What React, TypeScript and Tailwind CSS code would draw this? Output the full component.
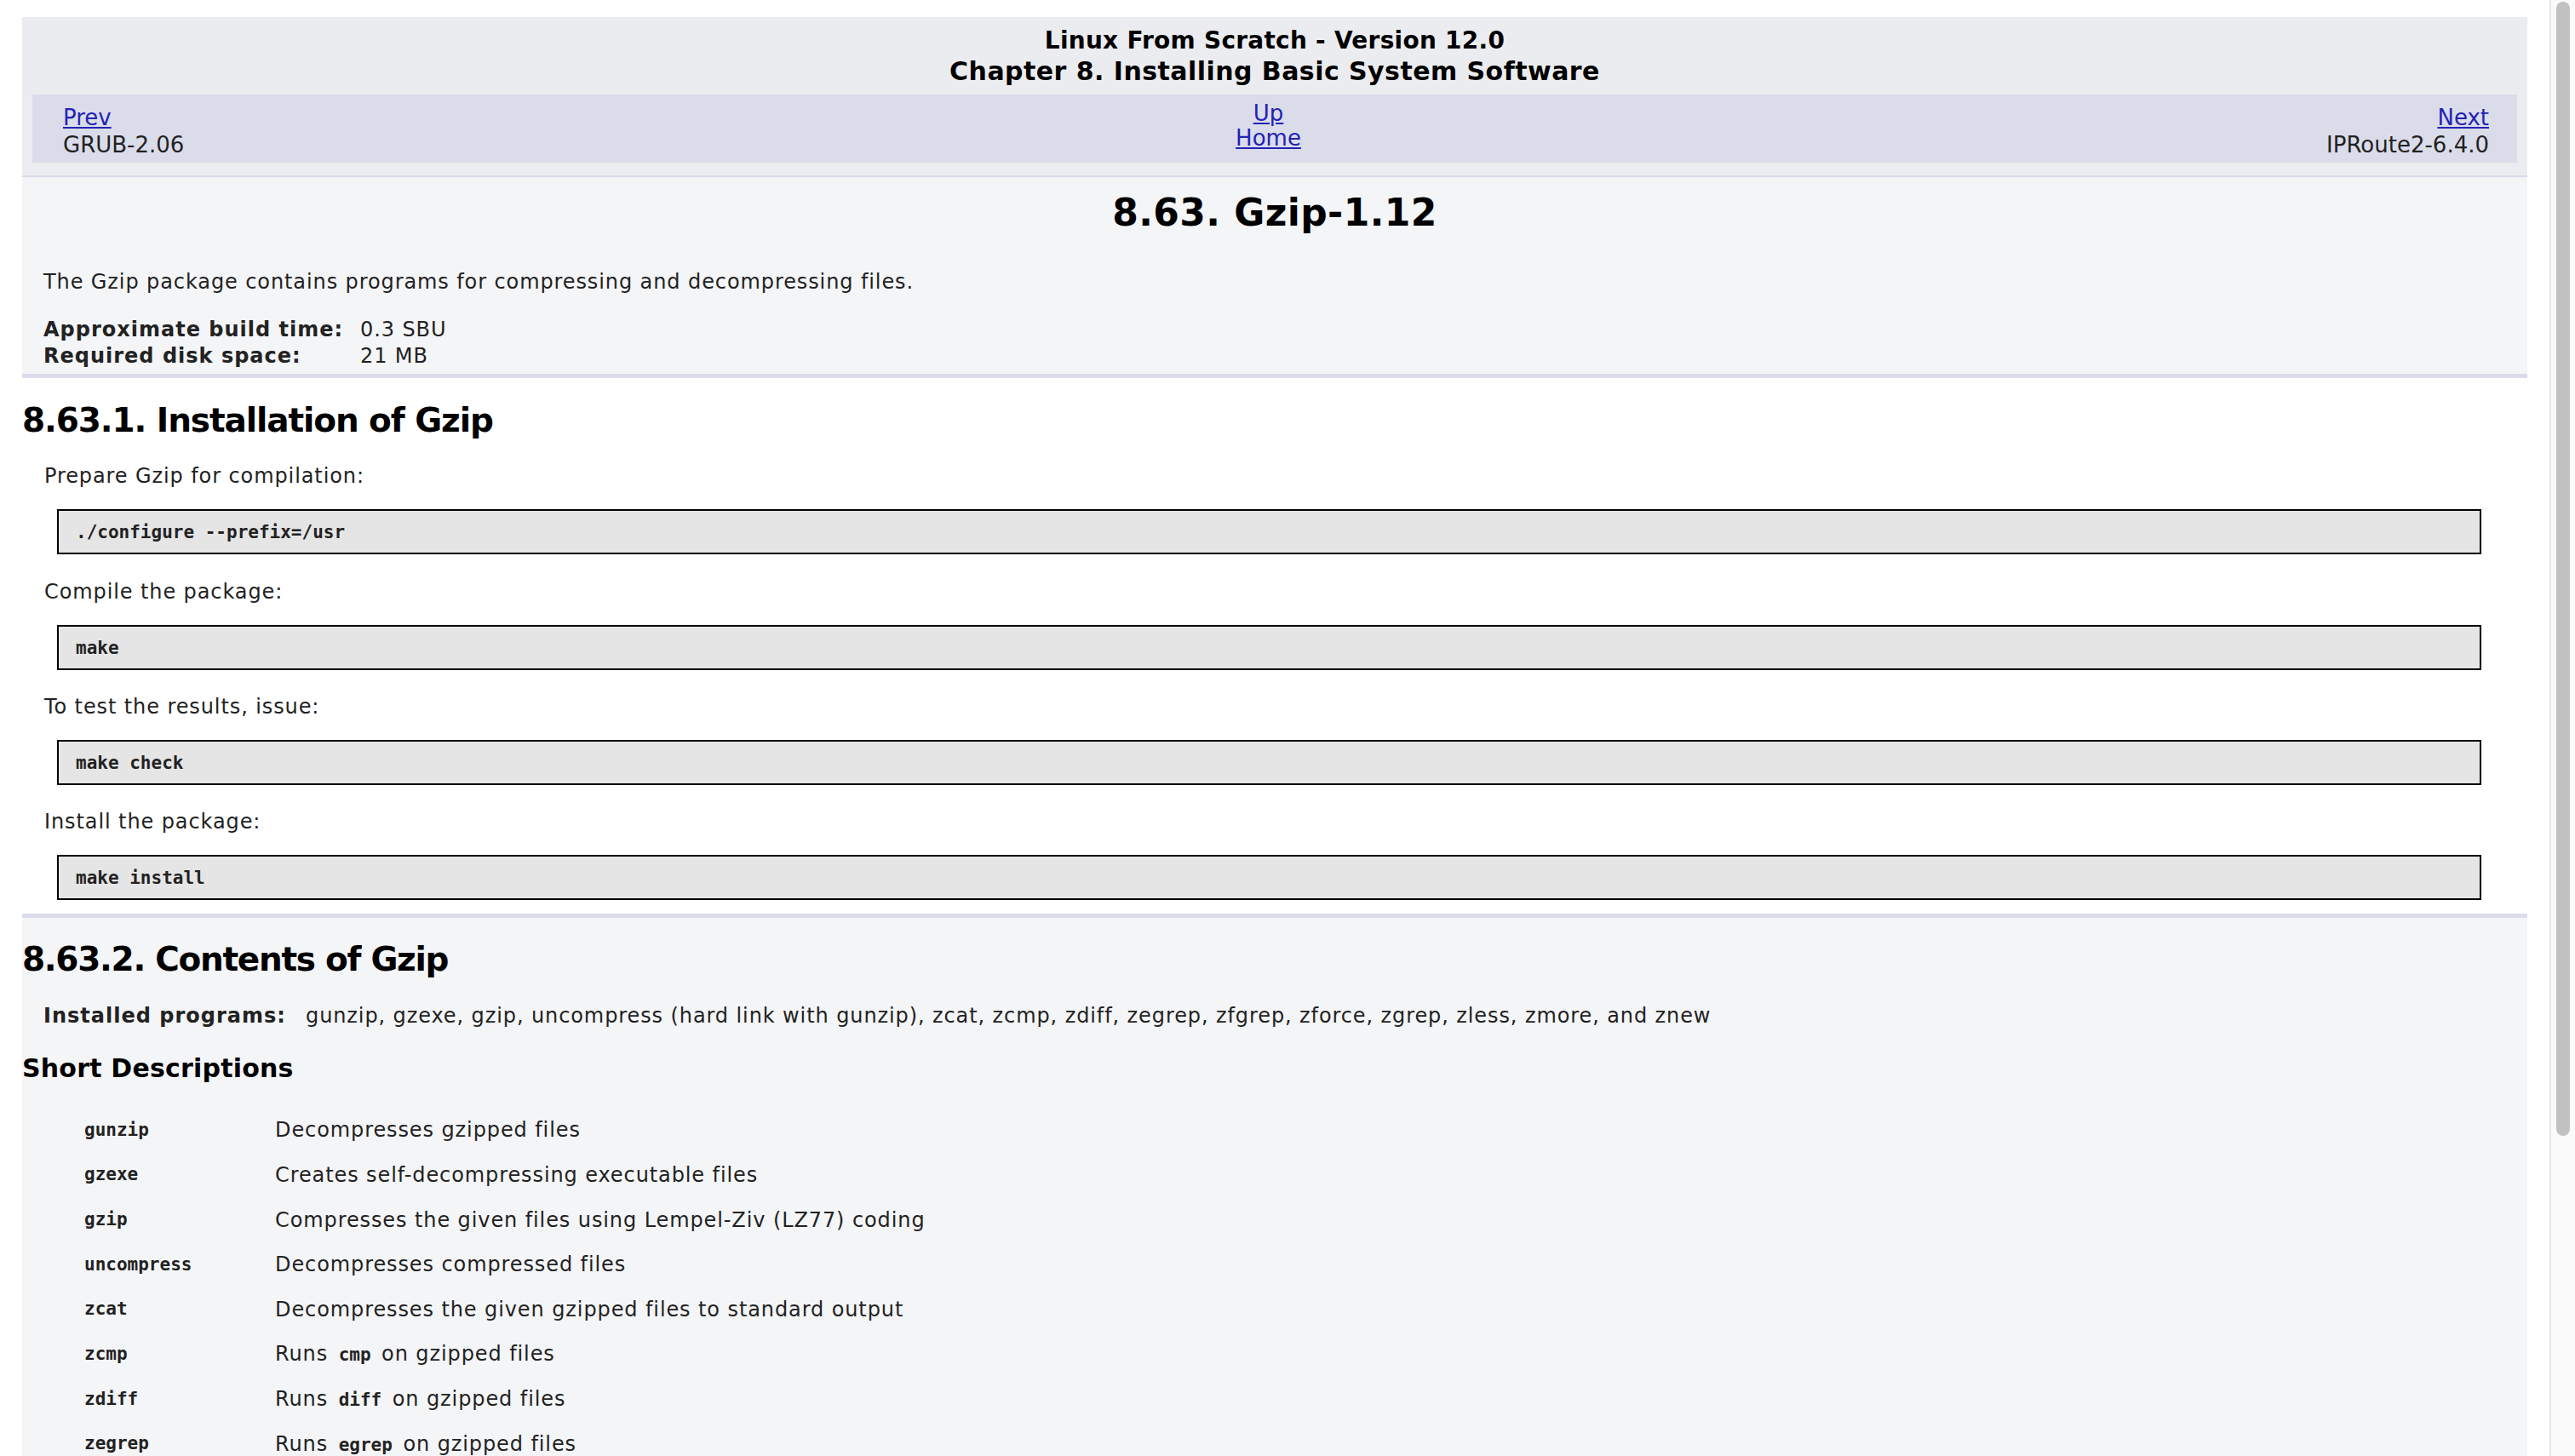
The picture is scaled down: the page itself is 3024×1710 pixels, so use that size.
import React from "react";

// Linux From Scratch book page: 8.63. Gzip-1.12

const sans = "font-['DejaVu_Sans',Verdana,sans-serif]";
const mono = "font-['DejaVu_Sans_Mono',monospace]";

type Row = { term: string; desc: React.ReactNode };

const Cmd = ({ children, inline }: { children: React.ReactNode; inline?: boolean }) => (
  <code className={`${mono} font-bold text-[21px] tracking-normal ${inline ? "mx-[4px]" : ""}`}>
    {children}
  </code>
);

const rows: Row[] = [
  { term: "gunzip", desc: "Decompresses gzipped files" },
  { term: "gzexe", desc: "Creates self-decompressing executable files" },
  { term: "gzip", desc: "Compresses the given files using Lempel-Ziv (LZ77) coding" },
  { term: "uncompress", desc: "Decompresses compressed files" },
  { term: "zcat", desc: "Decompresses the given gzipped files to standard output" },
  {
    term: "zcmp",
    desc: (
      <>
        Runs <Cmd inline>cmp</Cmd> on gzipped files
      </>
    ),
  },
  {
    term: "zdiff",
    desc: (
      <>
        Runs <Cmd inline>diff</Cmd> on gzipped files
      </>
    ),
  },
  {
    term: "zegrep",
    desc: (
      <>
        Runs <Cmd inline>egrep</Cmd> on gzipped files
      </>
    ),
  },
  {
    term: "zfgrep",
    desc: (
      <>
        Runs <Cmd inline>fgrep</Cmd> on gzipped files
      </>
    ),
  },
];

const steps = [
  { text: "Prepare Gzip for compilation:", cmd: "./configure --prefix=/usr" },
  { text: "Compile the package:", cmd: "make" },
  { text: "To test the results, issue:", cmd: "make check" },
  { text: "Install the package:", cmd: "make install" },
];

const NavHeader = () => (
  <div className="bg-[#ebecef] border-b-2 border-[#d9dae6] pt-[10px] pb-[15px]">
    <h4 className="text-center font-bold text-black text-[28px] leading-[36px] tracking-[0.25px]">
      Linux From Scratch - Version 12.0
    </h4>
    <h3 className="text-center font-bold text-black text-[30px] leading-[36px] tracking-[0.45px]">
      Chapter 8. Installing Basic System Software
    </h3>
    <div className="mx-[12px] mt-[9px] h-[80px] bg-[#dadcea] flex text-[26px] tracking-normal">
      <div className="flex-1 pl-[36px] pt-[11px] leading-[32px]">
        <a href="#" className="text-[#2323b4] underline block w-fit">
          Prev
        </a>
        <p>GRUB-2.06</p>
      </div>
      <div className="flex-1 flex flex-col items-center pt-[8px] pr-[18px] leading-[29px]">
        <a href="#" className="text-[#2323b4] underline">
          Up
        </a>
        <a href="#" className="text-[#2323b4] underline">
          Home
        </a>
      </div>
      <div className="flex-1 flex flex-col items-end pr-[33px] pt-[11px] leading-[32px]">
        <a href="#" className="text-[#2323b4] underline">
          Next
        </a>
        <p>IPRoute2-6.4.0</p>
      </div>
    </div>
  </div>
);

const Package = () => (
  <div className="bg-[#f4f5f7] border-b-[5px] border-[#dadcea] pt-[16px] pb-[5px]">
    <h1 className="text-center font-bold text-black text-[44px] leading-[52px] tracking-[0.4px]">
      8.63. Gzip-1.12
    </h1>
    <p className="mt-[41px] pl-[25px] leading-[28px]">
      The Gzip package contains programs for compressing and decompressing files.
    </p>
    <div className="mt-[27px] pl-[25px] grid grid-cols-[372px_1fr] leading-[31px]">
      <span className="font-bold tracking-[1px]">Approximate build time:</span>
      <span>0.3 SBU</span>
      <span className="font-bold tracking-[1px]">Required disk space:</span>
      <span>21 MB</span>
    </div>
  </div>
);

const Installation = () => (
  <div className="bg-white pt-[27px] pb-[16px]">
    <h2 className="font-bold text-black text-[39px] leading-[46px] tracking-[-1.1px]">
      8.63.1. Installation of Gzip
    </h2>
    {steps.map((s, i) => (
      <div key={s.cmd}>
        <p className={`pl-[26px] leading-[28px] ${i === 0 ? "mt-[28px]" : i === 1 ? "mt-[30px]" : "mt-[29px]"}`}>
          {s.text}
        </p>
        <pre
          className={`ml-[41px] mr-[54px] mt-[25px] border-2 border-black bg-[#e5e5e5] pl-[20px] py-[12.5px] ${mono} font-bold text-[21px] leading-[24px] tracking-normal text-[#222]`}
        >
          {s.cmd}
        </pre>
      </div>
    ))}
  </div>
);

const Contents = () => (
  <div className="bg-[#f4f5f7] border-t-[5px] border-[#dadcea] pt-[26px] pb-[40px]">
    <h2 className="font-bold text-black text-[39px] leading-[46px] tracking-[-1.3px]">
      8.63.2. Contents of Gzip
    </h2>
    <div className="mt-[29px] pl-[25px] grid grid-cols-[308px_1fr] leading-[28px]">
      <span className="font-bold tracking-[1px]">Installed programs:</span>
      <span>
        gunzip, gzexe, gzip, uncompress (hard link with gunzip), zcat, zcmp, zdiff,
        zegrep, zfgrep, zforce, zgrep, zless, zmore, and znew
      </span>
    </div>
    <h3 className="mt-[30px] font-bold text-black text-[30px] leading-[36px] tracking-[0.2px]">
      Short Descriptions
    </h3>
    <div className="mt-[28px] pl-[73px] grid grid-cols-[224px_1fr]">
      {rows.map((r) => (
        <React.Fragment key={r.term}>
          <div className="h-[52.7px] flex items-center">
            <Cmd>{r.term}</Cmd>
          </div>
          <div className="h-[52.7px] flex items-center leading-[28px]">
            <span>{r.desc}</span>
          </div>
        </React.Fragment>
      ))}
    </div>
  </div>
);

const Scrollbar = () => (
  <div className="w-[30px] shrink-0 bg-[#fafafa] border-l-2 border-[#e6e6e6] pl-[6px] pt-[2px]">
    <div className="w-[16px] h-[1332px] rounded-full bg-[#c1c1c1]" />
  </div>
);

export default function App() {
  return (
    <div
      className={`flex h-[1710px] overflow-hidden bg-white text-[#222] text-[24px] tracking-[0.9px] ${sans}`}
    >
      <div className="flex-1 min-w-0 px-[26px] pt-[20px] overflow-hidden">
        <NavHeader />
        <Package />
        <Installation />
        <Contents />
      </div>
      <Scrollbar />
    </div>
  );
}
